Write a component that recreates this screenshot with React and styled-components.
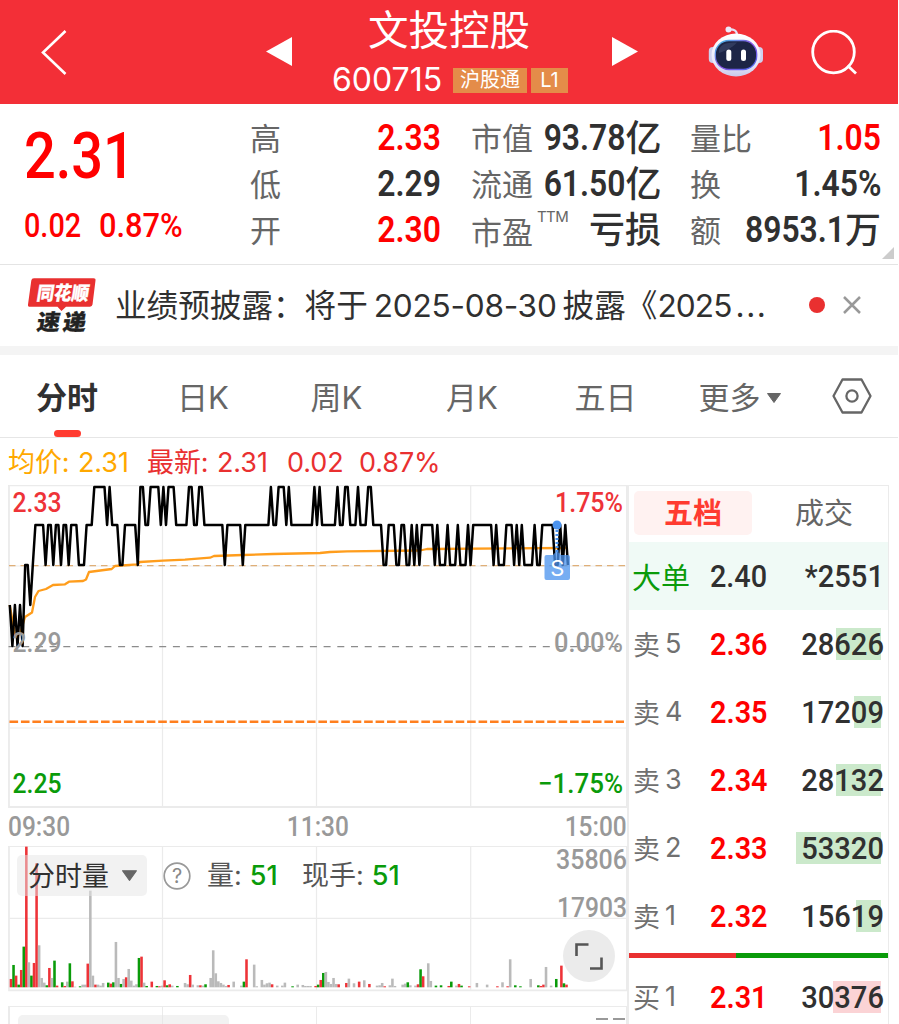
import React from 'react';
import styled, { createGlobalStyle } from 'styled-components';

const Global = createGlobalStyle`
  * { box-sizing: border-box; }
  body { margin: 0; background: #fff; }
`;

const SANS = `Inter, "Noto Sans CJK SC", sans-serif`;
const DIN = `Roboto, "Noto Sans CJK SC", sans-serif`;
const RED = '#ff0000';
const DARK = '#303030';
const GREEN = '#0a9b0a';

const Screen = styled.div`
  width: 898px;
  height: 1024px;
  overflow: hidden;
  background: #fff;
  font-family: ${SANS};
  color: ${DARK};
  display: flex;
  flex-direction: column;
`;

const Num = styled.span`
  display: inline-block;
  font-family: ${DIN};
  font-size: ${(p) => p.$size || 36}px;
  font-weight: ${(p) => p.$weight || 600};
  line-height: 1;
  color: ${(p) => p.$color || 'inherit'};
  transform: scaleX(${(p) => p.$sx || 0.885});
  transform-origin: ${(p) => p.$from || 'right'} center;
  white-space: nowrap;
`;

/* ---------- header ---------- */
const Header = styled.header`
  flex: none;
  height: 104px;
  background: #f32f37;
  color: #fff;
  display: flex;
  padding-left: 41px;
  svg { display: block; }
`;
const HeadIcon = styled.div`
  flex: none;
  padding-top: ${(p) => p.$top}px;
  margin-left: ${(p) => p.$ml || 0}px;
`;
const TitleBlock = styled.div`
  flex: none;
  width: 320px;
  display: flex;
  flex-direction: column;
  align-items: center;
`;
const StockName = styled.h1`
  margin: 0;
  padding: 6px 6px 0 0;
  font-size: 40.5px;
  line-height: 50px;
  font-weight: 400;
  white-space: nowrap;
`;
const CodeLine = styled.div`
  display: flex;
  align-items: center;
  margin-top: 7px;
  height: 34px;
`;
const Code = styled.span`
  font-size: 32px;
  line-height: 34px;
  width: 121px;
`;
const Tag = styled.span`
  height: 25px;
  width: ${(p) => p.$w}px;
  margin-right: 4px;
  background: #e48c49;
  font-size: 20px;
  line-height: 24px;
  text-align: center;
`;

/* ---------- quote ---------- */
const Quote = styled.section`
  flex: none;
  height: 161px;
  border-bottom: 1px solid #e4e4e4;
  display: grid;
  grid-template-columns: 226px 191px 190px 191px;
  padding-left: 24px;
  position: relative;
`;
const PriceBox = styled.div`
  padding-top: 20px;
`;
const Change = styled.div`
  display: flex;
  margin-top: 20px;
`;
const ChangeItem = styled.span`
  width: ${(p) => p.$w}px;
`;
const StatCol = styled.div`
  padding-top: 10px;
  width: ${(p) => p.$w}px;
  margin-left: ${(p) => p.$ml || 0}px;
`;
const Stat = styled.div`
  height: 46px;
  display: flex;
  align-items: center;
  justify-content: space-between;
`;
const StatLabel = styled.span`
  display: flex;
  font-size: 31px;
  line-height: 46px;
  color: #666;
  white-space: nowrap;
  padding-top: ${(p) => p.$drop || 3}px;
  sup {
    font-size: 15px;
    line-height: 15px;
    letter-spacing: -0.6px;
    margin: -1px -40px 0 4px;
    vertical-align: baseline;
  }
`;
const StatValue = styled.span`
  display: flex;
  align-items: center;
  padding-top: 1px;
  color: ${(p) => p.$color || DARK};
`;
const Unit = styled.span`
  font-size: 36px;
  font-weight: 500;
  line-height: 46px;
`;
const Corner = styled.svg`
  position: absolute;
  right: 4px;
  bottom: 5px;
`;

/* ---------- news ---------- */
const News = styled.section`
  flex: none;
  height: 90px;
  border-bottom: 9px solid #f4f4f4;
  display: flex;
  align-items: center;
  padding: 0 0 2px 26px;
  svg { overflow: visible; }
`;
const NewsText = styled.div`
  width: 666px;
  margin-left: 19px;
  padding-top: 2px;
  font-size: 31.6px;
  line-height: 40px;
  white-space: nowrap;
`;
const NewsDate = styled.span`
  letter-spacing: ${(p) => p.$ls || 0}px;
  margin: 0 ${(p) => p.$gap || 0}px;
`;
const NewsDots = styled.span`
  display: inline-block;
  margin-left: 4px;
  letter-spacing: 1.6px;
`;
const Dot = styled.i`
  width: 16px;
  height: 16px;
  border-radius: 50%;
  background: #e93030;
  margin: 0 18px 0 28px;
`;

/* ---------- tabs ---------- */
const Tabs = styled.nav`
  flex: none;
  height: 83px;
  border-bottom: 1px solid #e6e6e6;
  display: grid;
  grid-template-columns: 134px 138px 129px 142px 125px 143px 81px;
`;
const Tab = styled.div`
  display: flex;
  flex-direction: column;
  align-items: center;
  padding-top: 20px;
  font-size: 31px;
  line-height: 46px;
  color: ${(p) => (p.$active ? DARK : '#666')};
  font-weight: ${(p) => (p.$active ? 600 : 400)};
  span { display: flex; align-items: center; }
  svg { margin: -1px 0 0 6px; }
  &::after {
    content: '';
    display: ${(p) => (p.$active ? 'block' : 'none')};
    width: 27px;
    height: 7px;
    border-radius: 4px;
    margin-top: 9px;
    background: #ff3b30;
  }
`;
const Gear = styled.div`
  padding: 23px 0 0 21px;
`;

/* ---------- legend ---------- */
const Legend = styled.div`
  flex: none;
  height: 47px;
  padding-left: 8px;
  display: flex;
  font-size: 27px;
  line-height: 49px;
  color: #e93030;
  white-space: nowrap;
  letter-spacing: -0.1px;
`;
const LegendItem = styled.span`
  width: ${(p) => p.$w}px;
  color: ${(p) => p.$color || 'inherit'};
`;

/* ---------- chart column ---------- */
const Main = styled.main`
  display: flex;
  flex: 1;
  min-height: 0;
`;
const Charts = styled.div`
  width: 629px;
  padding-left: 8px;
  flex: none;
  svg { display: block; overflow: visible; }
`;
const TimeAxis = styled.div`
  height: 38px;
  width: 619px;
  padding-top: 5px;
  display: flex;
  justify-content: space-between;
  color: #999;
`;
const VolumeBox = styled.div`
  position: relative;
  height: 160px;
`;
const VolumeBar = styled.div`
  position: absolute;
  left: 9px;
  top: 9px;
  height: 41px;
  display: flex;
  align-items: center;
  font-size: 27px;
  line-height: 38px;
  color: #555;
  white-space: nowrap;
`;
const Pill = styled.div`
  width: ${(p) => p.$w}px;
  height: 41px;
  border-radius: 5px;
  background: rgba(229, 229, 229, 0.5);
  color: ${DARK};
  display: flex;
  align-items: center;
  padding: ${(p) => p.$pt || 2}px 0 0 11px;
  font-size: 27px;
  line-height: 39px;
  white-space: nowrap;
  svg { margin: -2px 0 0 13px; }
`;
const HelpIcon = styled.svg`
  margin-left: 16px;
`;
const Measure = styled.span`
  width: ${(p) => p.$w}px;
  margin: 0 0 0 ${(p) => p.$ml}px;
  b { font-weight: 500; color: ${GREEN}; margin-left: 8px; }
`;
const Expand = styled.div`
  position: absolute;
  left: 555px;
  top: 84px;
  width: 52px;
  height: 52px;
  border-radius: 50%;
  background: #ebebeb;
`;
const NextBox = styled.div`
  width: 619px;
  height: 60px;
  border: 2px solid #ebebeb;
  border-width: 1px 1px 0 2px;
  display: flex;
  justify-content: space-between;
  padding: 8px 0 0 8px;
  background: linear-gradient(#ebebeb, #ebebeb) 152px 0 / 1px 100% no-repeat,
    linear-gradient(#ebebeb, #ebebeb) 306px 0 / 1px 100% no-repeat,
    linear-gradient(#ebebeb, #ebebeb) 460px 0 / 1px 100% no-repeat;
`;
const Dashes = styled.span`
  display: flex;
  gap: 5px;
  padding: 3px 1px 0 0;
  i { width: 12px; height: 2px; background: #999; }
`;

/* ---------- order book ---------- */
const Book = styled.aside`
  width: 260px;
  border: solid #ebebeb;
  border-width: 1px 1px 0 0;
  box-shadow: -2px 0 0 #ececec;
`;
const BookTabs = styled.div`
  height: 56px;
  display: flex;
  padding: 5px 0 0 5px;
  font-size: 29px;
  line-height: 46px;
  text-align: center;
`;
const BookTab = styled.div`
  flex: none;
  width: 118px;
  height: 44px;
  border-radius: 5px;
  margin-right: 13px;
  background: ${(p) => (p.$active ? '#fff2f1' : 'transparent')};
  color: ${(p) => (p.$active ? '#ff3b30' : '#666')};
  font-weight: ${(p) => (p.$active ? 600 : 400)};
`;
const BookRow = styled.div`
  position: relative;
  height: 68px;
  display: grid;
  grid-template-columns: ${(p) => (p.$big ? 78 : 77)}px 60px 1fr;
  align-items: center;
  padding: 0 4px 1px ${(p) => (p.$big ? 3 : 4)}px;
  background: ${(p) => (p.$big ? '#f0faf6' : 'none')};
`;
const BookLabel = styled.span`
  display: flex;
  align-items: center;
  gap: 5px;
  font-size: ${(p) => (p.$big ? 29 : 27)}px;
  color: ${(p) => (p.$big ? GREEN : '#707070')};
`;
const Depth = styled.i`
  position: absolute;
  right: 7px;
  top: 18px;
  height: 32px;
  width: ${(p) => p.$w}px;
  background: ${(p) => (p.$buy ? '#fbd3d5' : '#cbe9cb')};
`;
const Volume = styled.span`
  position: relative;
  display: flex;
  justify-content: flex-end;
`;
const Ratio = styled.div`
  display: flex;
  height: 5px;
  margin: 3px 0 5px;
  background: linear-gradient(90deg, #e93030 107px, ${GREEN} 107px);
`;

const PRICE =
  '0:3 1:4 2:3 3:4 4:3 5:4 6:2 7:2 8:3 9:2 10:1 13:1 14:2 15:1 16:1 17:2 18:1 19:1 20:2 21:1 22:1 23:2 24:1 26:1 27:2 29:2 30:1 32:1 33:0 37:0 38:1 39:0 40:1 42:1 43:2 44:2 45:1 49:1 50:2 51:0 52:0 53:1 54:1 55:0 58:0 59:1 60:0 61:1 62:0 64:0 65:1 69:1 70:0 71:0 72:1 73:1 74:0 75:0 76:1 83:1 84:2 85:1 90:1 91:2 92:1 101:1 102:0 103:1 104:1 105:0 107:0 108:1 109:0 110:1 118:1 119:0 120:1 121:0 122:1 127:1 128:0 129:1 130:1 131:0 132:0 133:1 135:1 136:0 137:1 139:1 140:0 141:0 142:1 145:1 146:2 147:2 148:1 150:1 151:2 152:2 153:1 154:1 155:2 156:2 157:1 158:2 159:1 160:2 161:1 165:1 166:2 167:1 168:2 170:2 171:1 172:2 174:2 175:1 176:2 178:2 179:1 180:2 181:1 188:1 189:2 190:1 191:2 193:2 194:1 196:1 197:2 198:1 199:2 200:1 201:2 204:2 205:1 206:2 207:2 208:1 212:1 213:2 214:2 215:1 216:2 217:1 218:2';
const LEVELS = [487, 525, 565, 605, 646];
const priceLine = PRICE.split(' ')
  .map((s) => {
    const [m, l] = s.split(':').map(Number);
    return `${(9.8 + m * 2.56).toFixed(1)},${LEVELS[l]}`;
  })
  .join(' ');

const AVG =
  '9.7,605 12,618 15,635 20,634 25,617 32,612.5 35,597 38.5,591 46,589 53,585 65,584.3 69,581.7 83,581 86,579.5 89,572 111.7,569 115,566 137,564.3 140,562 163,560.7 185,559.7 210,557.7 214,556 243,555 273,554 320,553 330,552 347,551.3 420,550.5 427,549 567,548';

// minute, height in thirds of a pixel, tone (r / g / n)
const VOLUME =
  '0,25r 1,67g 2,35r 3,8g 4,52r 5,122g 6,422r 7,75n 8,35g 9,73r 10,372r 11,126n 12,28n 13,14n 14,6g 15,58r 16,28n 17,80g 18,5r 20,15g 21,4r 22,17n 23,72g 24,18r 25,2n 27,3g 28,8n 29,8n 30,71r 31,290n 32,35n 33,8r 34,8n 35,5n 36,13n 38,14g 39,11r 40,15g 41,136n 42,28n 43,10g 44,25n 45,30r 46,55n 47,20n 48,5n 49,9n 50,88g 51,92r 52,14n 53,4g 55,17r 57,4g 58,3r 59,5n 60,21r 61,6g 62,9r 63,5n 65,4g 68,13n 69,9n 70,37r 71,8n 73,6n 74,6r 75,5n 76,9g 78,28n 79,111n 80,42n 81,18n 82,13n 83,8n 84,4n 85,7r 87,17n 90,5n 91,17g 92,84r 95,68n 96,3n 98,22n 99,8n 100,12n 101,14n 102,9r 104,5n 106,5n 107,14n 110,3g 112,8n 114,7n 115,4n 116,4n 117,4n 119,4r 120,8g 121,22r 122,43g 123,46n 124,16n 125,10n 126,28n 127,10n 128,9r 131,13r 132,26n 134,12n 136,17r 138,21n 140,10r 143,5n 144,6n 145,13n 146,3r 148,6n 149,26n 150,4n 153,8n 154,11n 155,15g 156,6n 158,5n 159,9r 160,54g 161,33r 163,72n 164,19n 166,5g 168,6g 171,4r 172,17g 174,5n 175,10r 176,5g 179,3r 182,13n 186,8n 190,3r 192,15n 194,3r 195,84n 197,6g 199,3g 203,25n 206,6g 207,4r 208,8r 209,61n 211,5n 213,25g 215,65r 216,12g 217,8r';
const TONES = { r: '#ee3338', g: '#0a9b0a', n: '#bababa' };
const bars = VOLUME.split(' ').map((s) => {
  const [m, rest] = s.split(',');
  return { x: 9.7 + Number(m) * 2.56, h: parseInt(rest, 10) / 3, c: TONES[rest.slice(-1)] };
});

const ChartText = ({ x, y, w, color, size = 28, weight = 500, children }) => (
  <text x={x} y={y} textLength={w} lengthAdjust="spacingAndGlyphs" fill={color}
    fontFamily="Roboto, sans-serif" fontSize={size} fontWeight={weight}>{children}</text>
);

const PriceChart = () => (
  <svg width="621" height="323" viewBox="8 485 621 323">
    <g stroke="#ebebeb" fill="none">
      <path d="M162.5 486V807M316.5 486V807M470.7 486V807M9 566H626M9 728H626" strokeWidth="1.2" />
      <path d="M8 485.7H628" strokeWidth="1.2" />
      <path d="M9 485V807H628" strokeWidth="1.8" />
      <path d="M627 485V808" strokeWidth="2" />
    </g>
    <path d="M9 565.7H625" stroke="#dfaf78" strokeWidth="1.2" strokeDasharray="6.5 5" />
    <path d="M8.5 646.7H625" stroke="#8c8c8c" strokeWidth="1.3" strokeDasharray="7 6.7" />
    <path d="M9.5 721.8H624" stroke="#ff7f1e" strokeWidth="2.4" strokeDasharray="8.6 2.84" />
    <polyline points={AVG} fill="none" stroke="#ff9d1c" strokeWidth="2.3" strokeLinejoin="round" />
    <polyline points={priceLine} fill="none" stroke="#000" strokeWidth="2.5" strokeLinejoin="round" />
    <path d="M557 530V553" stroke="#4b93ee" strokeWidth="3" strokeDasharray="2 2" />
    <circle cx="557" cy="525" r="4.5" fill="#4b93ee" />
    <path d="M546.5 555H553L557 550.5L561 555H568a2 2 0 0 1 2 2V578a2 2 0 0 1 -2 2H546.5a2 2 0 0 1 -2 -2V557a2 2 0 0 1 2 -2Z" fill="#4b93ee" fillOpacity=".76" />
    <text x="557.3" y="576" textAnchor="middle" fontFamily="Inter, sans-serif" fontSize="22" fill="#fff">S</text>
    <ChartText x={12.5} y={511.5} w={49} color="#ee3338">2.33</ChartText>
    <ChartText x={555} y={511.5} w={68} color="#ee3338">1.75%</ChartText>
    <ChartText x={12.5} y={652} w={49} color="#999">2.29</ChartText>
    <ChartText x={554} y={652} w={69} color="#999">0.00%</ChartText>
    <ChartText x={12.5} y={792.5} w={49} color={GREEN}>2.25</ChartText>
    <ChartText x={538} y={792.5} w={85} color={GREEN}>−1.75%</ChartText>
  </svg>
);

const VolumeChart = () => (
  <svg width="621" height="145" viewBox="8 846 621 145">
    <g stroke="#ebebeb" fill="none">
      <path d="M162.5 846V991M316.5 846V991M470.7 846V991M9 918.4H626M8 846.5H628" strokeWidth="1.2" />
      <path d="M9 846V990.3H628" strokeWidth="1.8" />
      <path d="M627 846V991" strokeWidth="2" />
    </g>
    {bars.map((b) => (
      <rect key={b.x} x={b.x} y={987.3 - b.h} width="2.56" height={b.h} fill={b.c} />
    ))}
    <ChartText x={556} y={869} w={71} color="#999" size={27.5} weight={500}>35806</ChartText>
    <ChartText x={557} y={917} w={70} color="#999" size={27.5} weight={500}>17903</ChartText>
  </svg>
);

const Caret = ({ w = 14, h = 10 }) => (
  <svg width={w} height={h} viewBox="0 0 14 10">
    <path d="M0.5 0.5H13.5L7 9.5Z" fill="#666" stroke="#666" strokeLinejoin="round" />
  </svg>
);

const Robot = () => (
  <svg width="56" height="52" viewBox="0 0 56 52">
    <defs>
      <linearGradient id="shell" x1="0" y1="0" x2="0" y2="1">
        <stop offset="0" stopColor="#fff" />
        <stop offset=".7" stopColor="#e9e8fa" />
        <stop offset="1" stopColor="#c9c9ea" />
      </linearGradient>
      <linearGradient id="rim" x1="0" y1="0" x2="1" y2="1">
        <stop offset="0" stopColor="#3fc3e6" />
        <stop offset=".5" stopColor="#8a4fe0" />
        <stop offset="1" stopColor="#4a6df0" />
      </linearGradient>
    </defs>
    <path d="M20 3.5C26 3 29 4.5 29 9" fill="none" stroke="#e4e2f6" strokeWidth="2.2" />
    <circle cx="20.5" cy="3.6" r="3" fill="#eceafa" />
    <rect x="0.8" y="21" width="8" height="16" rx="4" fill="#cfd0ee" />
    <rect x="47" y="21" width="8" height="16" rx="4" fill="#cfd0ee" />
    <ellipse cx="28" cy="29" rx="24.5" ry="21.5" fill="url(#shell)" />
    <rect x="7.3" y="14.5" width="41.4" height="29" rx="13.5" fill="#1d2546" stroke="url(#rim)" strokeWidth="1.3" />
    <path d="M11 24C13 17.5 19 16.5 29 16.5C24 22 17 25 11 27Z" fill="#3b4466" opacity=".7" />
    <rect x="18.3" y="23.5" width="5" height="11.5" rx="2.5" fill="#fff" />
    <rect x="33" y="23.5" width="5" height="11.5" rx="2.5" fill="#fff" />
  </svg>
);

const NewsLogo = () => (
  <svg width="70" height="58" viewBox="26 275 70 58" fontFamily="Noto Sans CJK SC, sans-serif" fontWeight="900">
    <path d="M34 277.3H93.5a2 2 0 0 1 2 2.3L92.5 303.5a2.6 2.6 0 0 1 -2.5 2.2H66L61.5 310L57.5 305.7H30a2 2 0 0 1 -2 -2.3L31.3 279.6a2.7 2.7 0 0 1 2.7 -2.3Z" fill="#e93030" />
    <g transform="translate(36 299) skewX(-9)">
      <text textLength="52" lengthAdjust="spacingAndGlyphs" fontSize="19" fill="#fff" stroke="#fff" strokeWidth=".3">同花顺</text>
    </g>
    <g transform="translate(36 329.3) skewX(-9)" fill="#222" stroke="#222" strokeWidth=".3">
      <text textLength="23" lengthAdjust="spacingAndGlyphs" fontSize="22">速</text>
      <text x="26" textLength="23" lengthAdjust="spacingAndGlyphs" fontSize="22">递</text>
    </g>
  </svg>
);

const STATS = [
  { w: 191, rows: [['高', '2.33', '', RED], ['低', '2.29', ''], ['开', '2.30', '', RED]] },
  { w: 190, ml: 30, rows: [['市值', '93.78', '亿'], ['流通', '61.50', '亿'], ['市盈', '', '亏损']] },
  { w: 191, ml: 59, rows: [['量比', '1.05', '', RED], ['换', '1.45%', ''], ['额', '8953.1', '万']] },
];

const ASKS = [
  ['5', '2.36', '28626', 45],
  ['4', '2.35', '17209', 27],
  ['3', '2.34', '28132', 45],
  ['2', '2.33', '53320', 85],
  ['1', '2.32', '15619', 25],
];

const Order = ({ side, n, price, vol, depth, buy }) => (
  <BookRow>
    <Depth $w={depth} $buy={buy} />
    <BookLabel>{side}<span>{n}</span></BookLabel>
    <Num $size={32} $color={RED} $sx={0.9} $from="left">{price}</Num>
    <Volume><Num $size={32} $weight={500} $sx={0.91}>{vol}</Num></Volume>
  </BookRow>
);

export default function App() {
  return (
    <Screen>
      <Global />
      <Header>
        <HeadIcon $top={30}>
          <svg width="26" height="46" viewBox="0 0 26 46"><path d="M24.5 1L2 22.5L24.5 44" fill="none" stroke="#fff" strokeWidth="2.6" /></svg>
        </HeadIcon>
        <HeadIcon $top={37} $ml={199}>
          <svg width="26" height="30"><path d="M26 0V29L0 14.5Z" fill="#fff" /></svg>
        </HeadIcon>
        <TitleBlock>
          <StockName>文投控股</StockName>
          <CodeLine>
            <Code>600715</Code>
            <Tag $w={74}>沪股通</Tag>
            <Tag $w={37}>L1</Tag>
          </CodeLine>
        </TitleBlock>
        <HeadIcon $top={37}>
          <svg width="26" height="30"><path d="M0 0V29L26 14.5Z" fill="#fff" /></svg>
        </HeadIcon>
        <HeadIcon $top={26} $ml={70}><Robot /></HeadIcon>
        <HeadIcon $top={30} $ml={47}>
          <svg width="47" height="46" viewBox="0 0 47 46" fill="none" stroke="#fff" strokeWidth="2.8">
            <circle cx="22.5" cy="22" r="20.8" /><path d="M36.5 35.5L45 43.5" />
          </svg>
        </HeadIcon>
      </Header>

      <Quote>
        <PriceBox>
          <Num $size={65} $weight={500} $color={RED} $sx={0.86} $from="left">2.31</Num>
          <Change>
            <ChangeItem $w={75}><Num $size={33.5} $weight={500} $color={RED} $sx={0.86} $from="left">0.02</Num></ChangeItem>
            <ChangeItem><Num $size={33.5} $weight={500} $color={RED} $sx={0.92} $from="left">0.87%</Num></ChangeItem>
          </Change>
        </PriceBox>
        {STATS.map((col) => (
          <StatCol key={col.rows[0][0]} $w={col.w} $ml={col.ml}>
            {col.rows.map(([label, num, unit, color]) => (
              <Stat key={label}>
                <StatLabel $drop={label === '市盈' ? 8 : 3}>
                  {label}{label === '市盈' && <sup>TTM</sup>}
                </StatLabel>
                <StatValue $color={color}>
                  {num && <Num>{num}</Num>}
                  {unit && <Unit>{unit}</Unit>}
                </StatValue>
              </Stat>
            ))}
          </StatCol>
        ))}
        <Corner width="12" height="12"><path d="M12 0V12H0Z" fill="#ccc" /></Corner>
      </Quote>

      <News>
        <NewsLogo />
        <NewsText>
          业绩预披露：将于<NewsDate $ls={-0.25} $gap={6}>2025-08-30</NewsDate>披露《<NewsDate $ls={-0.9}>2025</NewsDate><NewsDots>...</NewsDots>
        </NewsText>
        <Dot />
        <svg width="18" height="18"><path d="M1 1L17 17M17 1L1 17" stroke="#999" strokeWidth="2.5" /></svg>
      </News>

      <Tabs>
        <Tab $active>分时</Tab>
        <Tab>日K</Tab>
        <Tab>周K</Tab>
        <Tab>月K</Tab>
        <Tab>五日</Tab>
        <Tab><span>更多<Caret /></span></Tab>
        <Gear>
          <svg width="40" height="36" viewBox="0 0 40 36" fill="none" stroke="#666" strokeWidth="2.3">
            <path d="M10.5 1.5H29.5L38.5 18L29.5 34.5H10.5L1.5 18Z" strokeLinejoin="round" />
            <circle cx="20" cy="18" r="5.6" />
          </svg>
        </Gear>
      </Tabs>

      <Legend>
        <LegendItem $w={70} $color="#ffa800">均价:</LegendItem>
        <LegendItem $w={69} $color="#ffa800">2.31</LegendItem>
        <LegendItem $w={70}>最新:</LegendItem>
        <LegendItem $w={70}>2.31</LegendItem>
        <LegendItem $w={72}>0.02</LegendItem>
        <LegendItem>0.87%</LegendItem>
      </Legend>

      <Main>
        <Charts>
          <PriceChart />
          <TimeAxis>
            <Num $size={27.5} $weight={500} $sx={0.89} $from="left">09:30</Num>
            <Num $size={27.5} $weight={500} $sx={0.89} $from="center">11:30</Num>
            <Num $size={27.5} $weight={500} $sx={0.89}>15:00</Num>
          </TimeAxis>
          <VolumeBox>
            <VolumeChart />
            <VolumeBar>
              <Pill $w={130}>分时量<Caret w={15} h={11} /></Pill>
              <HelpIcon width="28" height="28">
                <circle cx="14" cy="14" r="12.8" fill="none" stroke="#999" strokeWidth="1.7" />
                <text x="14" y="21" textAnchor="middle" fontFamily="Inter, sans-serif" fontSize="20" fill="#888">?</text>
              </HelpIcon>
              <Measure $ml={16} $w={96}>量:<b>51</b></Measure>
              <Measure $ml={-1}>现手:<b>51</b></Measure>
            </VolumeBar>
            <Expand>
              <svg width="52" height="52" fill="none" stroke="#555" strokeWidth="2.6">
                <path d="M13.5 26V14.5H25.5M27 38.5H38.5V27.5" />
              </svg>
            </Expand>
          </VolumeBox>
          <NextBox>
            <Pill $w={211} $pt={6}>主力资金</Pill>
            <Dashes><i /><i /></Dashes>
          </NextBox>
        </Charts>

        <Book>
          <BookTabs>
            <BookTab $active>五档</BookTab>
            <BookTab>成交</BookTab>
          </BookTabs>
          <BookRow $big>
            <BookLabel $big>大单</BookLabel>
            <Num $size={32} $weight={500} $sx={0.9} $from="left">2.40</Num>
            <Volume><Num $size={32} $weight={500} $sx={0.91}>*2551</Num></Volume>
          </BookRow>
          {ASKS.map(([n, price, vol, depth]) => (
            <Order key={n} side="卖" n={n} price={price} vol={vol} depth={depth} />
          ))}
          <Ratio />
          <Order side="买" n="1" price="2.31" vol="30376" depth={48} buy />
        </Book>
      </Main>
    </Screen>
  );
}
